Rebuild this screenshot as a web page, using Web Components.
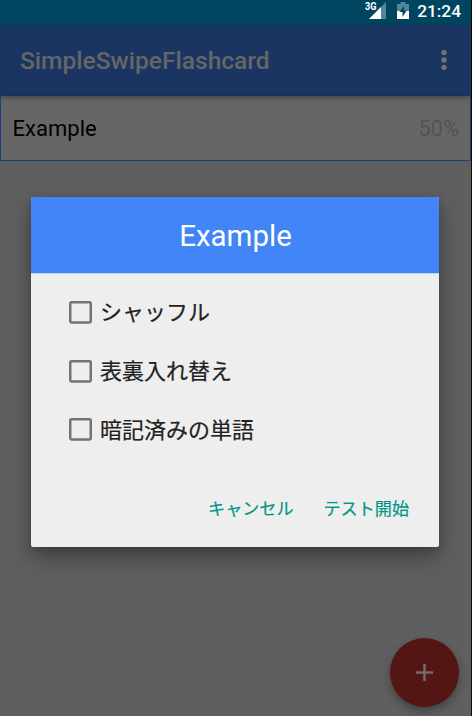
<!DOCTYPE html>
<html lang="ja">
<head>
<meta charset="utf-8">
<title>SimpleSwipeFlashcard</title>
<style>
html,body{margin:0;height:100%;overflow:hidden}
body{background:#0b0b0b;font-family:Roboto,"Noto Sans CJK JP",sans-serif}
</style>
</head>
<body>
<flash-app></flash-app>
<script>
const define = (name, html) => {
  const t = document.createElement('template');
  t.innerHTML = html;
  customElements.define(name, class extends HTMLElement {
    constructor() {
      super();
      this.attachShadow({ mode: 'open' }).append(t.content.cloneNode(true));
    }
  });
};

define('status-bar', `
<style>
:host{display:flex;height:25px;box-sizing:border-box;background:#004560;color:#fff;justify-content:flex-end;align-items:flex-start;padding-right:10px}
svg{display:block}
.time{font:500 17.3px/22px Roboto,sans-serif;margin-left:8px;height:22px}
.net{display:flex;align-items:flex-start}
.g{font:700 10px/13px Roboto,sans-serif;margin-right:-7px;width:11px;transform:scaleX(.92);transform-origin:0 0}
</style>
<div class="net"><span class="g">3G</span>
<svg width="18" height="22" viewBox="0 0 18 22"><path d="M0 19L17 2V19Z" fill="#54869a"/><path d="M0 19L12 7V19Z" fill="#fff"/></svg></div>
<svg style="margin-left:10px" width="12" height="22" viewBox="0 0 12 22"><path d="M3.500 2h5v2H12V11H0V4H3.500z" fill="#54869a"/><path d="M0 11h12v8H0z" fill="#fff"/><path d="M7 6L2.500 12H5.500V17L9.700 10.500H7z" fill="#004560"/></svg>
<span class="time">21:24</span>`);

define('app-bar', `
<style>
:host{display:flex;height:70px;box-sizing:border-box;background:#1b3562;color:#666;align-items:center;padding:0 22px 0 20px;box-shadow:0 2px 6px rgba(0,0,0,.4);position:relative;z-index:1}
.t{flex:1;font-size:24.550px;font-weight:500;line-height:30px;padding-top:2px}
svg{display:block}
</style>
<span class="t"><slot></slot></span>
<svg width="10" height="22" viewBox="0 0 10 22" fill="#747474"><circle cx="5" cy="3.500" r="2.600"/><circle cx="5" cy="10.900" r="2.600"/><circle cx="5" cy="18.300" r="2.600"/></svg>`);

define('deck-row', `
<style>
:host{display:flex;height:66px;box-sizing:border-box;background:#666;border:1px solid #1f3f80;align-items:center;justify-content:space-between;padding:1px 11px 0 11.600px;font-size:22px;color:#000}
.p{color:#535353}
</style>
<slot></slot><span class="p"><slot name="score"></slot></span>`);

define('add-button', `
<style>
:host{display:flex;width:69px;height:69px;border-radius:50%;background:#541515;align-items:center;justify-content:center;box-shadow:0 4px 9px rgba(0,0,0,.32)}
</style>
<svg width="17" height="17" viewBox="0 0 17 17" stroke="#746a6a" stroke-width="2.500"><path d="M0 8.500H17M8.500 0V17"/></svg>`);

define('check-item', `
<style>
:host{display:flex;height:58.700px;align-items:center;font-size:22px;line-height:30px;color:#212121;font-family:"Noto Sans CJK JP",sans-serif;-webkit-text-stroke:.2px #212121}
svg{display:block;margin-right:8px;flex:none}
span{padding-bottom:4px}
</style>
<svg width="23" height="23" viewBox="0 0 23 23"><rect x="1.250" y="1.250" width="20.500" height="20.300" rx="1.200" fill="none" stroke="#737373" stroke-width="2.500"/></svg><span><slot></slot></span>`);

define('text-button', `
<style>
:host{display:block;font:400 17.100px/24px "Noto Sans CJK JP",sans-serif;color:#009688;-webkit-text-stroke:.2px #009688}
</style><slot></slot>`);

define('option-dialog', `
<style>
:host{display:flex;flex-direction:column;width:408px;height:350px;background:#eee;border-radius:2px;overflow:hidden;box-sizing:border-box;box-shadow:0 10px 22px rgba(0,0,0,.34),0 2px 6px rgba(0,0,0,.15)}
header{height:76px;flex:none;box-sizing:border-box;background:#4285f6;color:#fff;font-size:29.500px;line-height:76px;padding:1px 0 0 1px;text-align:center}
.b{border-top:1px solid #bdd3f3;flex:1;padding:9px 38px 0}
footer{display:flex;justify-content:flex-end;gap:30px;padding:0 30px 27px 0}
</style>
<header><slot name="title"></slot></header>
<div class="b"><slot></slot></div>
<footer><slot name="action"></slot></footer>`);

define('flash-app', `
<style>
:host{display:block;position:relative;width:471px;height:716px;background:#5f5f5f}
option-dialog{position:absolute;left:31px;top:197px}
add-button{position:absolute;left:390px;top:638px}
</style>
<status-bar></status-bar>
<app-bar>SimpleSwipeFlashcard</app-bar>
<deck-row>Example<span slot="score">50%</span></deck-row>
<add-button></add-button>
<option-dialog>
<span slot="title">Example</span>
<check-item>シャッフル</check-item>
<check-item>表裏入れ替え</check-item>
<check-item>暗記済みの単語</check-item>
<text-button slot="action">キャンセル</text-button>
<text-button slot="action">テスト開始</text-button>
</option-dialog>`);
</script>
</body>
</html>
